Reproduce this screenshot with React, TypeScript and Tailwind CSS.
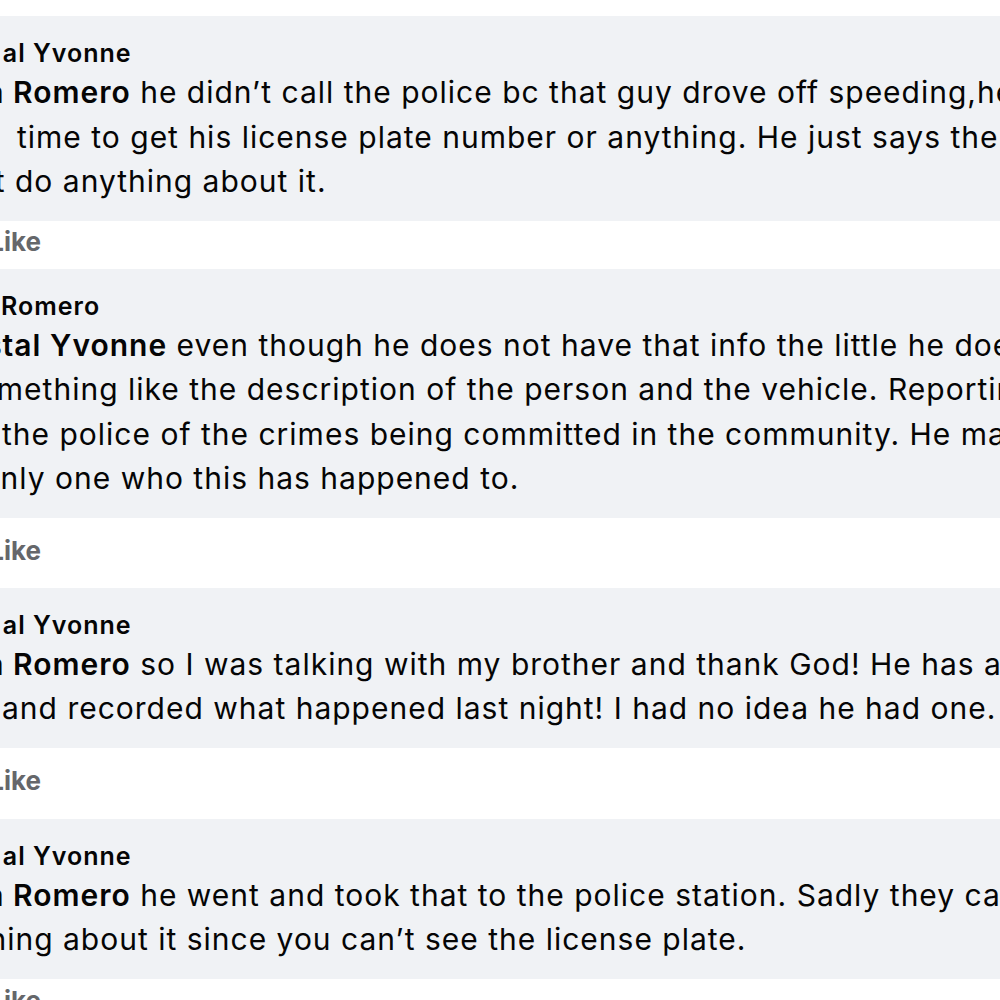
import React from "react";

type Seg = { t: string; b?: boolean };
type Line = { pre: string; preB?: boolean; w: number; rest: Seg[] };

function Cut({ pre, preB, w }: { pre: string; preB?: boolean; w: number }) {
  return (
    <span
      className={`inline-flex shrink-0 justify-end whitespace-pre ${preB ? "font-semibold" : ""}`}
      style={{ width: w }}
    >
      {pre}
    </span>
  );
}

function BodyLine({ line }: { line: Line }) {
  return (
    <div className="flex whitespace-pre">
      <Cut pre={line.pre} preB={line.preB} w={line.w} />
      <span className="whitespace-pre">
        {line.rest.map((s, i) =>
          s.b ? (
            <span key={i} className="font-semibold">
              {s.t}
            </span>
          ) : (
            <span key={i}>{s.t}</span>
          )
        )}
      </span>
    </div>
  );
}

function Bubble({
  name,
  lines,
}: {
  name: { pre: string; w: number; rest: string };
  lines: Line[];
}) {
  return (
    <div className="bg-[#f0f2f5] pt-[22px] pb-[17px]">
      <div className="flex whitespace-pre text-[25px] leading-[30px] font-semibold tracking-[1px]">
        <Cut pre={name.pre} w={name.w} />
        <span>{name.rest}</span>
      </div>
      <div className="mt-[2px] text-[30px] leading-[44.5px] tracking-[1px]">
        {lines.map((l, i) => (
          <BodyLine key={i} line={l} />
        ))}
      </div>
    </div>
  );
}

function LikeRow({ h, pt }: { h: string; pt: string }) {
  return (
    <div className={`${h} ${pt} flex whitespace-pre text-[26px] leading-[32px] font-bold text-[#65676b]`}>
      <Cut pre="1w  L" w={4} />
      <span>ike</span>
    </div>
  );
}

export default function App() {
  const crystal = { pre: "al ", w: 33, rest: "Yvonne" };
  return (
    <div className="h-[1000px] w-[1000px] overflow-hidden bg-white font-['Inter',sans-serif] text-[#050505]">
      <div className="h-[16px]" />
      <Bubble
        name={crystal}
        lines={[
          {
            pre: "Vanessa ",
            preB: true,
            w: 13,
            rest: [
              { t: "Romero", b: true },
              { t: " he didn’t call the police bc that guy drove off speeding,he didn’t have" },
            ],
          },
          { pre: "", w: 17, rest: [{ t: "time to get his license plate number or anything. He just says the cops" }] },
          { pre: "didn’t ", w: 15, rest: [{ t: "do anything about it." }] },
        ]}
      />
      <LikeRow h="h-[48px]" pt="pt-[5px]" />
      <Bubble
        name={{ pre: "Vanessa ", w: 1, rest: "Romero" }}
        lines={[
          {
            pre: "Crystal ",
            preB: true,
            w: 50,
            rest: [
              { t: "Yvonne", b: true },
              { t: " even though he does not have that info the little he does have" },
            ],
          },
          { pre: "something ", w: 128, rest: [{ t: "like the description of the person and the vehicle. Reporting it" }] },
          { pre: "inform ", w: 2, rest: [{ t: "the police of the crimes being committed in the community. He may not" }] },
          { pre: "the only ", w: 55, rest: [{ t: "one who this has happened to." }] },
        ]}
      />
      <LikeRow h="h-[70px]" pt="pt-[17px]" />
      <Bubble
        name={crystal}
        lines={[
          {
            pre: "Vanessa ",
            preB: true,
            w: 13,
            rest: [
              { t: "Romero", b: true },
              { t: " so I was talking with my brother and thank God! He has a camera" },
            ],
          },
          { pre: "camera ", w: 2, rest: [{ t: "and recorded what happened last night! I had no idea he had one." }] },
        ]}
      />
      <LikeRow h="h-[71px]" pt="pt-[17px]" />
      <Bubble
        name={crystal}
        lines={[
          {
            pre: "Vanessa ",
            preB: true,
            w: 13,
            rest: [
              { t: "Romero", b: true },
              { t: " he went and took that to the police station. Sadly they can’t do" },
            ],
          },
          { pre: "anything ", w: 63, rest: [{ t: "about it since you can’t see the license plate." }] },
        ]}
      />
      <LikeRow h="h-[48px]" pt="pt-[6px]" />
    </div>
  );
}
